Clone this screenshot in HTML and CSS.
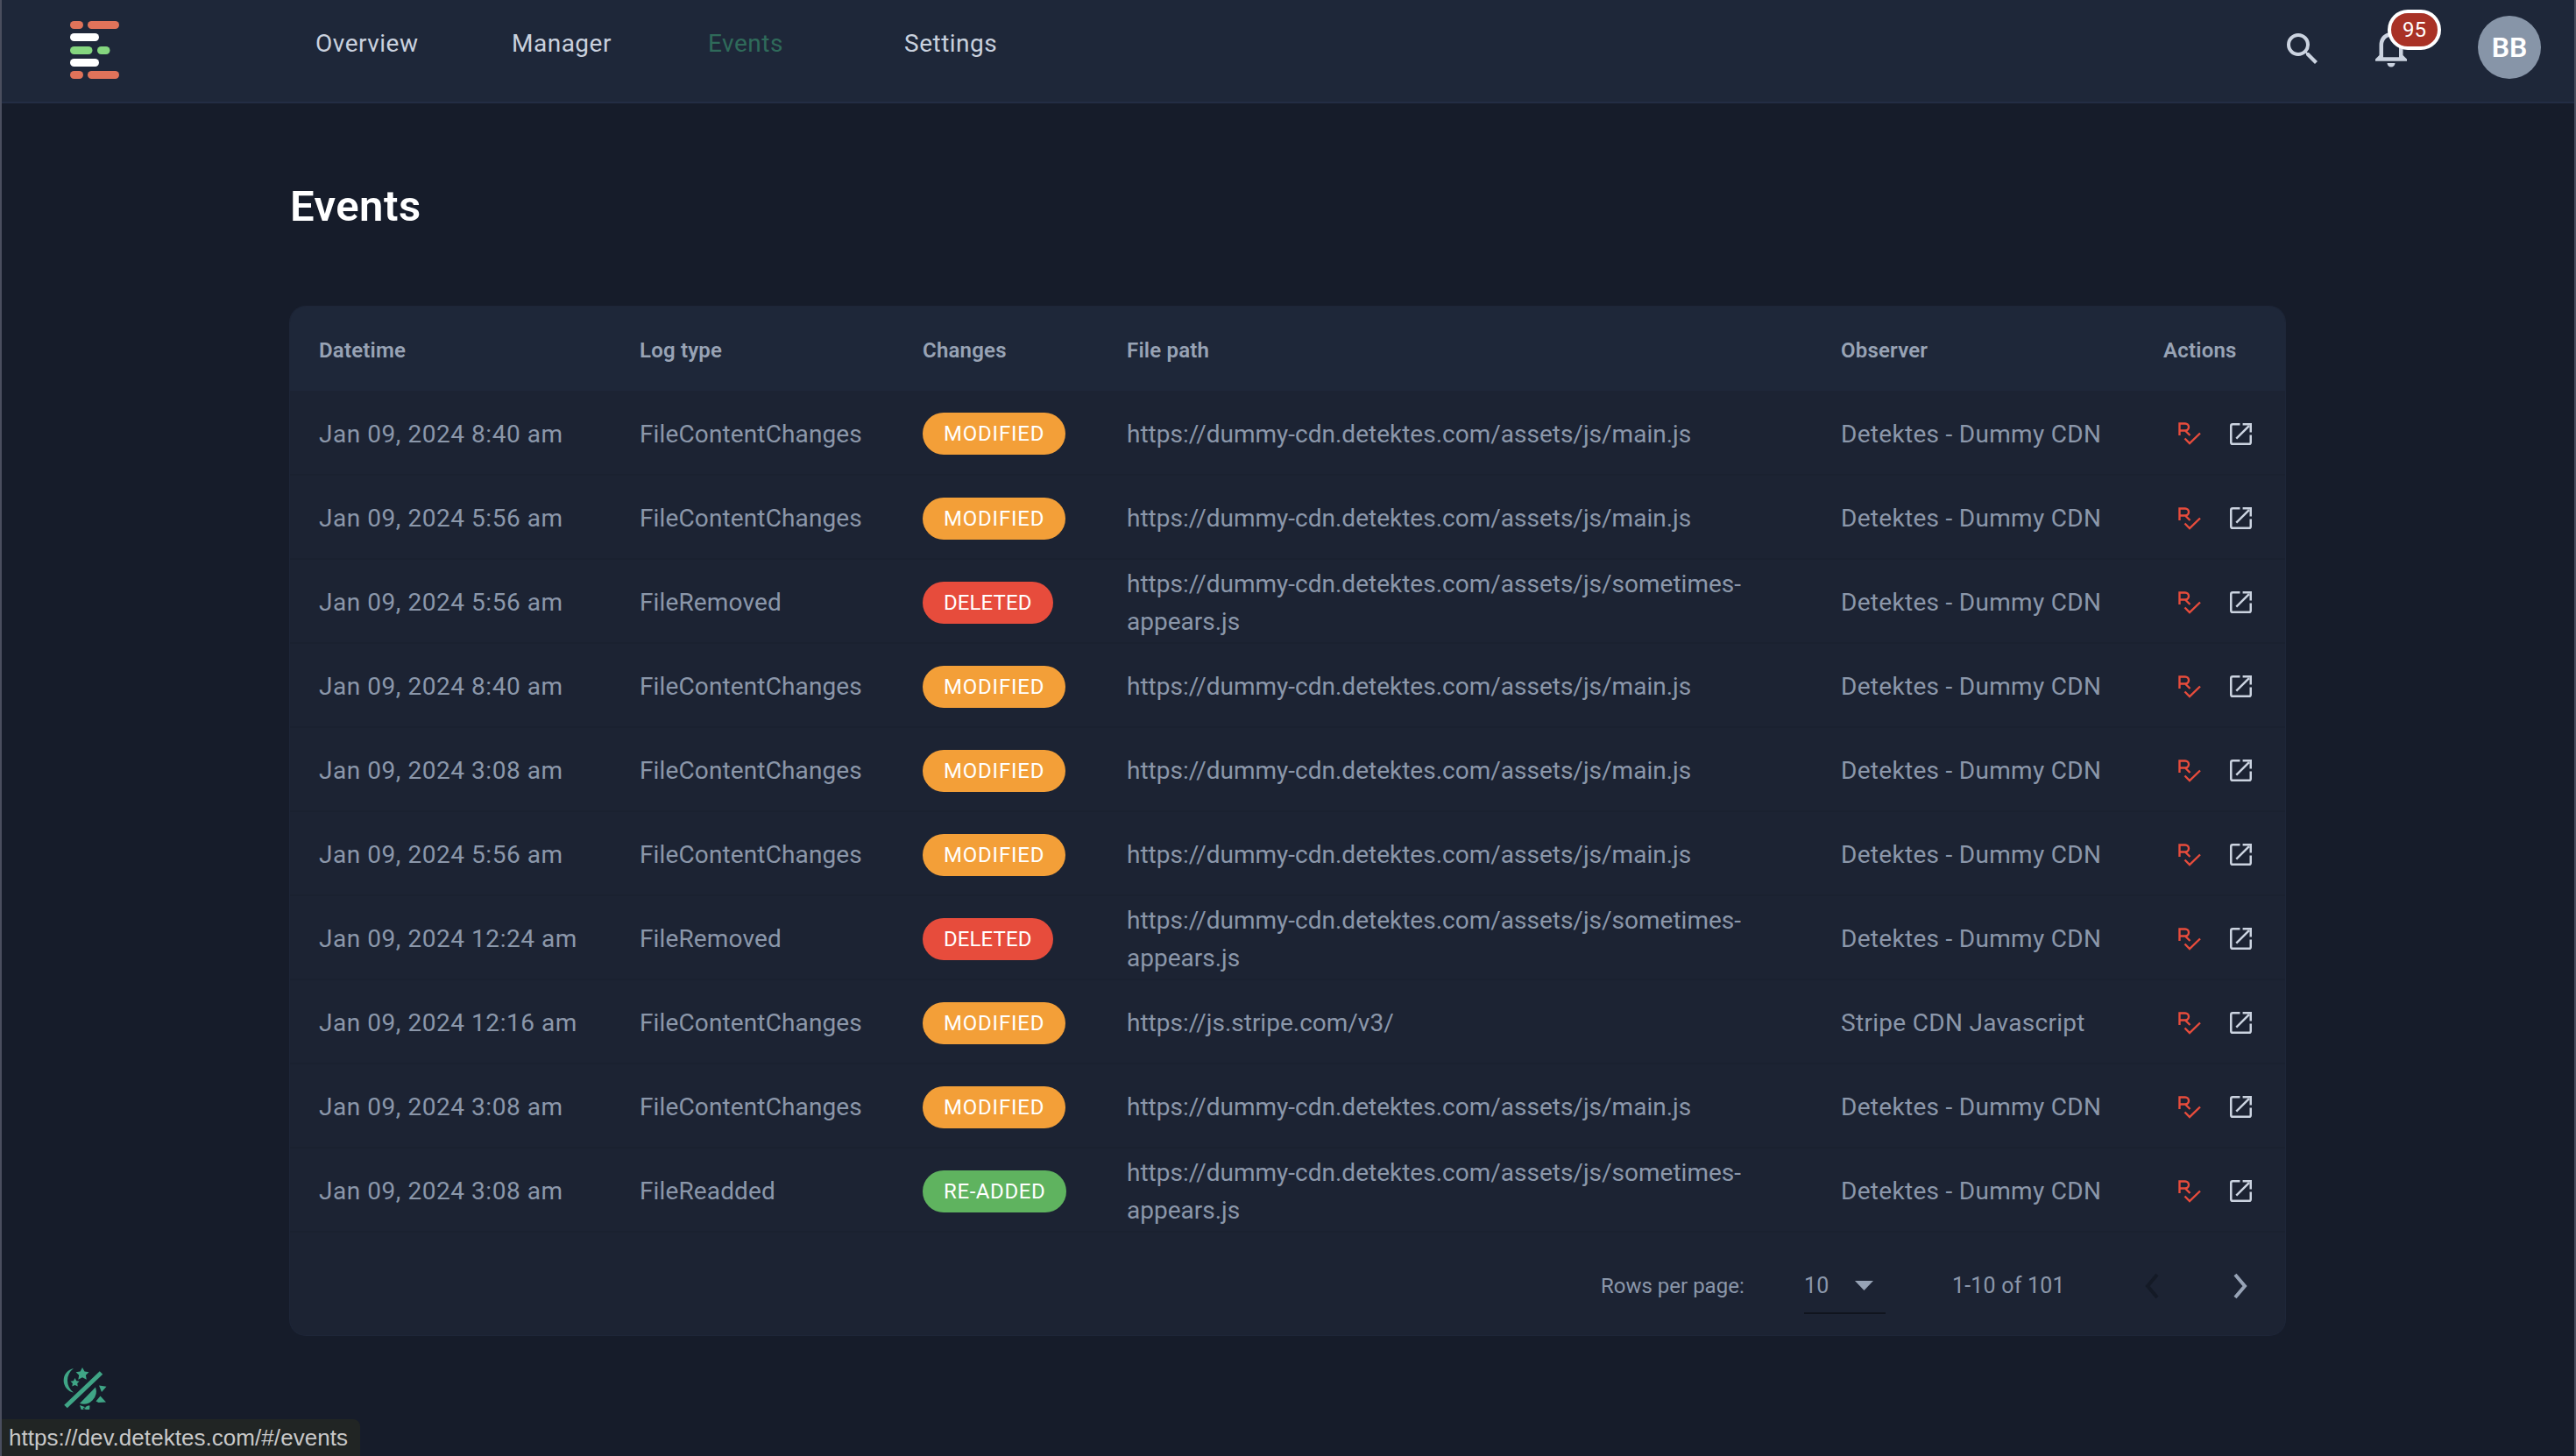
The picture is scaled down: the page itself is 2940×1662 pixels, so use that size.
FILE: index.html
```html
<!DOCTYPE html>
<html lang="en">
<head>
<meta charset="utf-8">
<title>Events</title>
<link rel="stylesheet" href="styles.css">
</head>
<body>
<svg class="sprites" aria-hidden="true">
  <symbol id="rx" viewBox="0 0 26 26">
    <path d="M1.5 15V1.5H8a4 4 0 0 1 0 8H1.500M8 9.500L13.500 15" fill="none" stroke="currentColor" stroke-width="2.400"/>
    <path d="M7.500 18.500L13 24L25 12.500" fill="none" stroke="currentColor" stroke-width="2.400"/>
  </symbol>
  <symbol id="ext" viewBox="0 0 24 24">
    <path d="M11 1.200H3A1.800 1.800 0 0 0 1.200 3V21A1.800 1.800 0 0 0 3 22.800H21A1.800 1.800 0 0 0 22.800 21V13" fill="none" stroke="currentColor" stroke-width="2.400"/>
    <path d="M7 17L21 3M14 1.200H22.800V10" fill="none" stroke="currentColor" stroke-width="2.400"/>
  </symbol>
</svg>
<header class="topbar">
  <svg class="logo" viewBox="0 0 56 66" aria-label="Detektes">
    <rect x="0" y="0" width="15" height="9" rx="4.5" fill="#e0735a"/><rect x="20" y="0" width="36" height="9" rx="4.5" fill="#e0735a"/>
    <rect x="0" y="14" width="33" height="9" rx="4.5" fill="#fff"/>
    <rect x="0" y="29" width="25.500" height="9" rx="4.5" fill="#85d67f"/><rect x="31" y="29" width="14.500" height="9" rx="4.5" fill="#85d67f"/>
    <rect x="0" y="43" width="33" height="9" rx="4.5" fill="#fff"/>
    <rect x="0" y="57" width="15" height="9" rx="4.5" fill="#e0735a"/><rect x="20" y="57" width="36" height="9" rx="4.5" fill="#e0735a"/>
  </svg>
  <nav class="nav">
    <a class="nav-item">Overview</a>
    <a class="nav-item">Manager</a>
    <a class="nav-item active">Events</a>
    <a class="nav-item">Settings</a>
  </nav>
  <div class="tools">
    <svg class="tool-icon search" viewBox="0 0 24 24"><path fill="currentColor" d="M15.5 14h-.79l-.28-.27A6.47 6.47 0 0 0 16 9.5 6.5 6.5 0 1 0 9.500 16c1.610 0 3.090-.59 4.230-1.570l.27.28v.79l5 4.990L20.490 19l-4.990-5zm-6 0C7.010 14 5 11.990 5 9.500S7.010 5 9.500 5 14 7.010 14 9.500 11.990 14 9.500 14z"/></svg>
    <div class="bell">
      <svg class="bell-icon" viewBox="0 0 24 24"><path fill="currentColor" d="M12 22c1.100 0 2-.9 2-2h-4c0 1.100.9 2 2 2zm6-6v-5c0-3.070-1.630-5.640-4.500-6.320V4c0-.83-.67-1.500-1.500-1.500s-1.500.67-1.500 1.500v.68C7.640 5.360 6 7.920 6 11v5l-2 2v1h16v-1l-2-2zm-2 1H8v-6c0-2.480 1.510-4.500 4-4.500s4 2.020 4 4.500v6z"/></svg>
      <span class="badge-count">95</span>
    </div>
    <div class="avatar">BB</div>
  </div>
</header>
<main class="page">
  <h1 class="title">Events</h1>
  <section class="card">
    <table class="events">
      <colgroup><col class="c1"><col class="c2"><col class="c3"><col class="c4"><col class="c5"><col class="c6"></colgroup>
      <thead>
        <tr><th>Datetime</th><th>Log type</th><th>Changes</th><th>File path</th><th>Observer</th><th>Actions</th></tr>
      </thead>
      <tbody>
        <tr><td>Jan 09, 2024 8:40 am</td><td>FileContentChanges</td><td><span class="pill mod">MODIFIED</span></td><td>https://dummy-cdn.detektes.com/assets/js/main.js</td><td>Detektes - Dummy CDN</td><td><div class="acts"><svg class="rx"><use href="#rx"/></svg><svg class="ext"><use href="#ext"/></svg></div></td></tr>
        <tr><td>Jan 09, 2024 5:56 am</td><td>FileContentChanges</td><td><span class="pill mod">MODIFIED</span></td><td>https://dummy-cdn.detektes.com/assets/js/main.js</td><td>Detektes - Dummy CDN</td><td><div class="acts"><svg class="rx"><use href="#rx"/></svg><svg class="ext"><use href="#ext"/></svg></div></td></tr>
        <tr><td>Jan 09, 2024 5:56 am</td><td>FileRemoved</td><td><span class="pill del">DELETED</span></td><td>https://dummy-cdn.detektes.com/assets/js/sometimes-appears.js</td><td>Detektes - Dummy CDN</td><td><div class="acts"><svg class="rx"><use href="#rx"/></svg><svg class="ext"><use href="#ext"/></svg></div></td></tr>
        <tr><td>Jan 09, 2024 8:40 am</td><td>FileContentChanges</td><td><span class="pill mod">MODIFIED</span></td><td>https://dummy-cdn.detektes.com/assets/js/main.js</td><td>Detektes - Dummy CDN</td><td><div class="acts"><svg class="rx"><use href="#rx"/></svg><svg class="ext"><use href="#ext"/></svg></div></td></tr>
        <tr><td>Jan 09, 2024 3:08 am</td><td>FileContentChanges</td><td><span class="pill mod">MODIFIED</span></td><td>https://dummy-cdn.detektes.com/assets/js/main.js</td><td>Detektes - Dummy CDN</td><td><div class="acts"><svg class="rx"><use href="#rx"/></svg><svg class="ext"><use href="#ext"/></svg></div></td></tr>
        <tr><td>Jan 09, 2024 5:56 am</td><td>FileContentChanges</td><td><span class="pill mod">MODIFIED</span></td><td>https://dummy-cdn.detektes.com/assets/js/main.js</td><td>Detektes - Dummy CDN</td><td><div class="acts"><svg class="rx"><use href="#rx"/></svg><svg class="ext"><use href="#ext"/></svg></div></td></tr>
        <tr><td>Jan 09, 2024 12:24 am</td><td>FileRemoved</td><td><span class="pill del">DELETED</span></td><td>https://dummy-cdn.detektes.com/assets/js/sometimes-appears.js</td><td>Detektes - Dummy CDN</td><td><div class="acts"><svg class="rx"><use href="#rx"/></svg><svg class="ext"><use href="#ext"/></svg></div></td></tr>
        <tr><td>Jan 09, 2024 12:16 am</td><td>FileContentChanges</td><td><span class="pill mod">MODIFIED</span></td><td>https://js.stripe.com/v3/</td><td>Stripe CDN Javascript</td><td><div class="acts"><svg class="rx"><use href="#rx"/></svg><svg class="ext"><use href="#ext"/></svg></div></td></tr>
        <tr><td>Jan 09, 2024 3:08 am</td><td>FileContentChanges</td><td><span class="pill mod">MODIFIED</span></td><td>https://dummy-cdn.detektes.com/assets/js/main.js</td><td>Detektes - Dummy CDN</td><td><div class="acts"><svg class="rx"><use href="#rx"/></svg><svg class="ext"><use href="#ext"/></svg></div></td></tr>
        <tr><td>Jan 09, 2024 3:08 am</td><td>FileReadded</td><td><span class="pill add">RE-ADDED</span></td><td>https://dummy-cdn.detektes.com/assets/js/sometimes-appears.js</td><td>Detektes - Dummy CDN</td><td><div class="acts"><svg class="rx"><use href="#rx"/></svg><svg class="ext"><use href="#ext"/></svg></div></td></tr>
      </tbody>
    </table>
    <footer class="pager">
      <span class="rows-label">Rows per page:</span>
      <div class="select"><span>10</span><svg class="caret" viewBox="0 0 21 11"><path d="M0 0H21L10.500 11Z" fill="currentColor"/></svg></div>
      <span class="range">1-10 of 101</span>
      <svg class="chev prev" viewBox="0 0 16 30"><path d="M14 2L3 15L14 28" fill="none" stroke="currentColor" stroke-width="4"/></svg>
      <svg class="chev next" viewBox="0 0 16 30"><path d="M2 2L13 15L2 28" fill="none" stroke="currentColor" stroke-width="4"/></svg>
    </footer>
  </section>
</main>
<svg class="theme" viewBox="0 0 52 48" aria-label="Toggle theme">
  <path fill="#3fa586" d="M14 1A14 14 0 0 0 14 28.500 A17 17 0 0 1 14 1Z"/>
  <path fill="#3fa586" d="M24 0l2.500 4.500 5 .7-3.600 3.500.9 5-4.800-2.400-4.700 2.400.9-5-3.600-3.500 5-.7zM15.500 12l1.700 3.200 3.500.5-2.500 2.400.6 3.500-3.300-1.700-3.200 1.700.6-3.500-2.500-2.400 3.500-.5z"/>
  <path fill="none" stroke="#3fa586" stroke-width="5" d="M5 44.500L45.500 6"/>
  <path fill="#3fa586" d="M39 22.500A14.500 14.500 0 0 1 21 41Z"/>
  <path fill="#3fa586" d="M43 20.500l8.500 1.200-5.500 6.300zM44.500 32.500l6.500 7-8.500.5-3-1.500zM21 43l7 2.500-5 3.500zM32.500 43.500l-2 0-6 3 7.500 3z"/>
</svg>
<div class="status-link">https://dev.detektes.com/#/events</div>
</body>
</html>
```
FILE: styles.css
```css
* { box-sizing: border-box; }
html, body { margin: 0; height: 100%; }
body {
  background: #161c2a;
  border-left: 2px solid #4a4e5e;
  border-right: 2px solid #4a4e5e;
  font-family: Roboto, "Noto Sans", sans-serif;
  color: #8b97aa;
  overflow: hidden;
  position: relative;
}
.sprites { display: none; }
.topbar {
  height: 118px;
  background: #1e2739;
  border-bottom: 2px solid #232d44;
  display: flex;
  align-items: flex-start;
  padding-left: 78px;
}
.logo { width: 56px; height: 66px; margin-top: 24px; flex: none; }
.nav { display: flex; margin-left: 224px; margin-top: 30px; }
.nav-item { width: 224px; font-size: 28px; line-height: 40px; color: #c9d1de; letter-spacing: .5px; }
.nav-item.active { color: #2f6a5a; }
.tools { margin-left: auto; display: flex; align-items: center; height: 108px; padding-right: 38px; }
.tool-icon { width: 48px; height: 48px; color: #cbd3e0; display: block; }
.search { margin-right: 50px; margin-top: 4px; }
.bell { position: relative; width: 54px; height: 54px; margin-right: 72px; }
.bell-icon { width: 54px; height: 54px; color: #cbd3e0; display: block; }
.badge-count {
  position: absolute; left: 23px; top: -16px;
  width: 61px; height: 46px;
  background: #a93226; border: 4px solid #fff; border-radius: 23px;
  color: #fff; font-size: 24px; line-height: 38px; text-align: center;
}
.avatar {
  width: 72px; height: 72px; border-radius: 50%;
  background: #8795a8; color: #fff;
  font-size: 32px; font-weight: 600; line-height: 72px; text-align: center;
}
.page { padding: 0 330px 0 329px; }
.title { margin: 93px 0 0; height: 50px; font-size: 49px; line-height: 50px; font-weight: 600; color: #fff; letter-spacing: .5px; }
.card {
  margin-top: 89px; width: 2277px; height: 1174px;
  background: #1c2333; border-radius: 18px; overflow: hidden;
  box-shadow: 0 0 0 1px #1e2638;
}
.events { width: 100%; border-collapse: collapse; table-layout: fixed; }
.c1 { width: 365px; } .c2 { width: 323px; } .c3 { width: 233px; }
.c4 { width: 815px; } .c5 { width: 368px; } .c6 { width: 173px; }
th {
  height: 96px; background: #1e2739; text-align: left;
  padding: 3px 0 0 34px; font-size: 24px; font-weight: 600; color: #98a3b5; letter-spacing: .2px;
}
th:first-child, td:first-child { padding-left: 33px; }
td {
  height: 96px; padding: 3px 0 0 34px;
  font-size: 28px; line-height: 43px; color: #8b97aa; letter-spacing: .3px;
  border-bottom: 2px solid #1a2130;
}
td:nth-child(1) { letter-spacing: .55px; }
td:nth-child(2) { letter-spacing: .13px; }
td:nth-child(4) { padding-right: 60px; letter-spacing: 0; }
.pill {
  display: inline-block; height: 48px; padding: 0 24px; border-radius: 24px;
  color: #fff; font-size: 24px; line-height: 48px; vertical-align: middle;
}
.mod { background: #f39f38; letter-spacing: .8px; }
.del { background: #e74c3c; letter-spacing: .1px; }
.add { background: #5fb35f; letter-spacing: .6px; }
.acts { display: flex; align-items: center; gap: 33px; padding-left: 17px; }
.rx { width: 26px; height: 26px; color: #e74c3c; }
.ext { width: 25px; height: 25px; color: #cbd3e0; }
.pager { height: 118px; padding: 3px 0 0 1496px; display: flex; align-items: center; font-size: 25px; color: #8b97aa; letter-spacing: .2px; }
.rows-label { width: 232px; font-size: 24px; letter-spacing: 0; }
.select { width: 93px; height: 62px; border-bottom: 2px solid #10141e; display: flex; align-items: center; justify-content: space-between; padding: 0 14px 0 0; margin-top: 2px; }
.caret { width: 21px; height: 11px; color: #97a3b6; }
.range { margin-left: 76px; width: 220px; }
.chev { width: 16px; height: 30px; }
.prev { color: #141a26; }
.next { color: #97a3b6; margin-left: 85px; }
.theme { position: absolute; left: 68px; top: 1561px; width: 52px; height: 48px; }
.status-link {
  position: absolute; left: -2px; bottom: 0; width: 411px; height: 42px;
  background: #212524; border-top-right-radius: 8px;
  font-family: "Liberation Sans", sans-serif; font-size: 26px; line-height: 42px;
  color: #c8c8c8; padding-left: 10px; white-space: nowrap; letter-spacing: .05px;
}
```
